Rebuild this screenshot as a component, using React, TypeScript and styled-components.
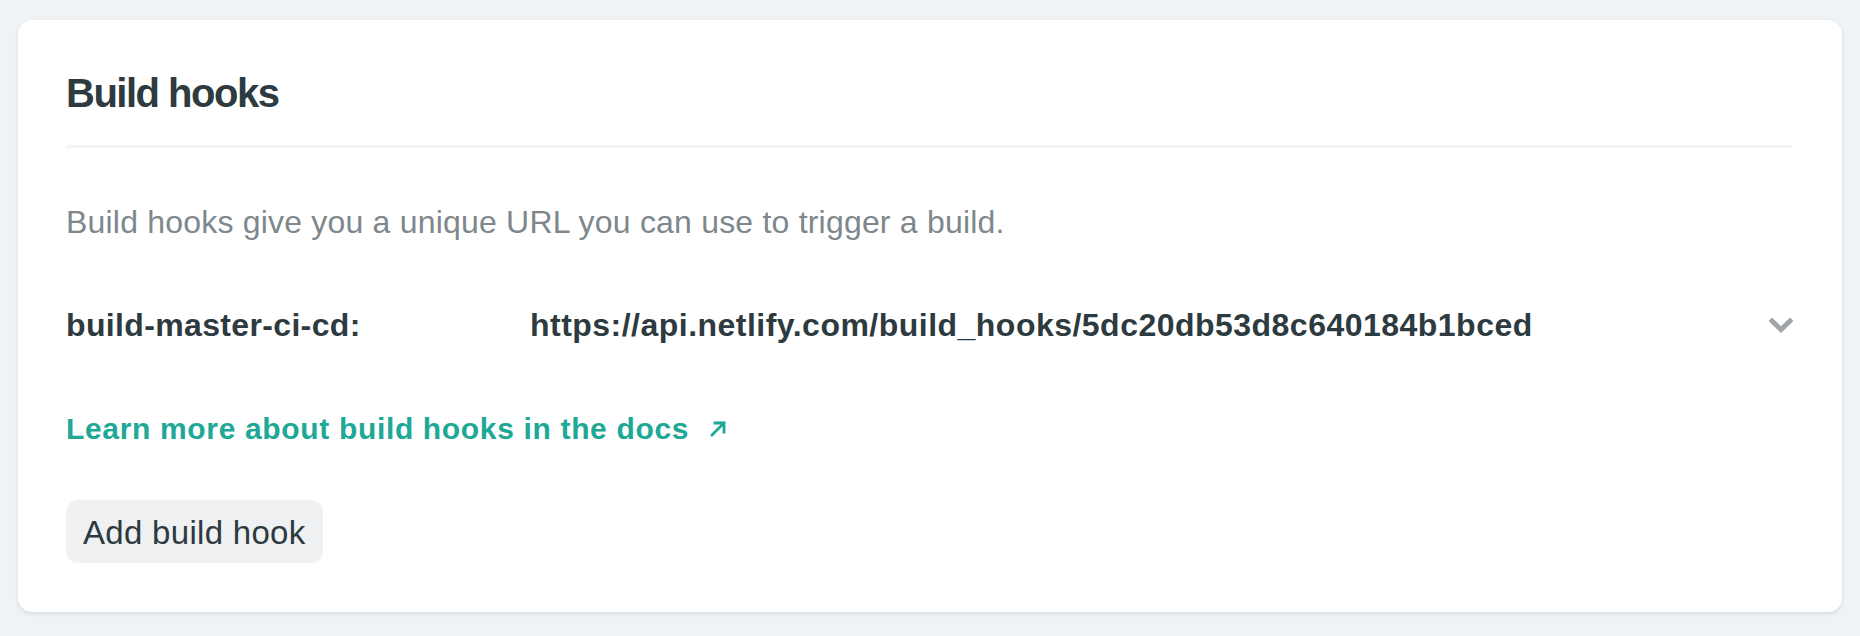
import React from "react";
import styled, { createGlobalStyle } from "styled-components";

const GlobalStyle = createGlobalStyle`
  html, body {
    margin: 0;
    padding: 0;
    background: #f0f3f6;
    font-family: "Liberation Sans", Arial, sans-serif;
    -webkit-font-smoothing: antialiased;
  }
`;

const Page = styled.div`
  padding: 20px 18px 24px;
`;

const Card = styled.section`
  background: #ffffff;
  border-radius: 14px;
  box-shadow: 0 2px 4px rgba(14, 30, 37, 0.1), 0 0 1px rgba(14, 30, 37, 0.06);
  padding: 49px 49px 49px 48px;
  display: flex;
  flex-direction: column;
`;

const Header = styled.header`
  border-bottom: 3px solid #f2f4f6;
  padding-bottom: 28px;
`;

const Title = styled.h2`
  margin: 0;
  font-size: 40px;
  line-height: 48px;
  font-weight: 700;
  letter-spacing: -1.5px;
  color: #2d3a40;
`;

const Description = styled.p`
  margin: 50px 0 0;
  font-size: 32px;
  line-height: 48px;
  letter-spacing: 0.2px;
  color: #7e878b;
`;

const HookRow = styled.div`
  margin-top: 55px;
  display: grid;
  grid-template-columns: 464px 1fr auto;
  align-items: center;
  height: 48px;
`;

const HookName = styled.span`
  font-size: 32px;
  line-height: 48px;
  font-weight: 700;
  letter-spacing: 0.35px;
  color: #2d3a40;
`;

const HookUrl = styled.span`
  font-size: 32px;
  line-height: 48px;
  font-weight: 700;
  letter-spacing: 0.48px;
  color: #2d3a40;
`;

const Toggle = styled.button`
  border: 0;
  background: none;
  padding: 0;
  display: flex;
  align-items: center;
  justify-content: center;
  width: 24px;
  height: 24px;
  cursor: pointer;
`;

const DocsLink = styled.a`
  margin-top: 58px;
  align-self: flex-start;
  display: inline-flex;
  align-items: center;
  gap: 20px;
  font-size: 30px;
  line-height: 44px;
  font-weight: 700;
  letter-spacing: 0.66px;
  color: #20a897;
  text-decoration: none;
`;

const AddButton = styled.button`
  margin-top: 49px;
  align-self: flex-start;
  height: 63px;
  padding: 2px 17px 0;
  border: 0;
  border-radius: 12px;
  background: #eff1f3;
  font-family: "Liberation Sans", Arial, sans-serif;
  font-size: 33px;
  line-height: 61px;
  letter-spacing: 0.3px;
  color: #2d3a40;
  cursor: pointer;
`;

const Chevron = () => (
  <svg width="24" height="15" viewBox="0 0 24 15" fill="none">
    <path d="M3 3 L12 11.5 L21 3" stroke="#9fa6a9" strokeWidth="5" strokeLinecap="square" strokeLinejoin="miter" />
  </svg>
);

const ExternalArrow = () => (
  <svg width="18" height="18" viewBox="0 0 18 18" fill="none">
    <path d="M3 15 L15 3 M6 3 H15 V12" stroke="#20a897" strokeWidth="2.8" strokeLinecap="square" />
  </svg>
);

export default function App() {
  return (
    <>
      <GlobalStyle />
      <Page>
        <Card>
          <Header>
            <Title>Build hooks</Title>
          </Header>
          <Description>Build hooks give you a unique URL you can use to trigger a build.</Description>
          <HookRow>
            <HookName>build-master-ci-cd:</HookName>
            <HookUrl>https://api.netlify.com/build_hooks/5dc20db53d8c640184b1bced</HookUrl>
            <Toggle aria-label="Expand">
              <Chevron />
            </Toggle>
          </HookRow>
          <DocsLink href="#">
            Learn more about build hooks in the docs
            <ExternalArrow />
          </DocsLink>
          <AddButton>Add build hook</AddButton>
        </Card>
      </Page>
    </>
  );
}
